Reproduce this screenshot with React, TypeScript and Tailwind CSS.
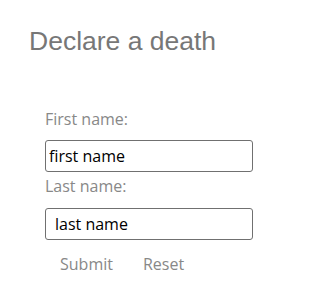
import React from 'react'

export default function App() {
  return (
    <div className="min-h-screen w-[290px] bg-white pt-[26px] pl-[29px]">
      {/* Heading */}
      <h1 className="text-[26.5px] leading-[30px] text-[#777777] font-['Liberation_Sans',Arial,sans-serif]">
        Declare a death
      </h1>

      {/* Form */}
      <form className="mt-[52px] ml-[16px] w-[208px] flex flex-col font-['Open_Sans',sans-serif] text-[16px] leading-[22px]">
        <label className="text-[#888888]">First name:</label>
        <input
          type="text"
          defaultValue="first name"
          className="mt-[10px] h-[32px] w-[208px] rounded-[3px] border border-[#707070] pl-[3px] text-black outline-none"
        />
        <label className="mt-[3px] text-[#888888]">Last name:</label>
        <input
          type="text"
          defaultValue="last name"
          className="mt-[11px] h-[32px] w-[208px] rounded-[3px] border border-[#707070] pl-[9px] text-black outline-none"
        />
        <div className="mt-[13px] flex">
          <button type="button" className="pl-[15px] pr-[14px] text-[#888888]">Submit</button>
          <button type="reset" className="pl-[16px] pr-[14px] text-[#888888]">Reset</button>
        </div>
      </form>
    </div>
  )
}
